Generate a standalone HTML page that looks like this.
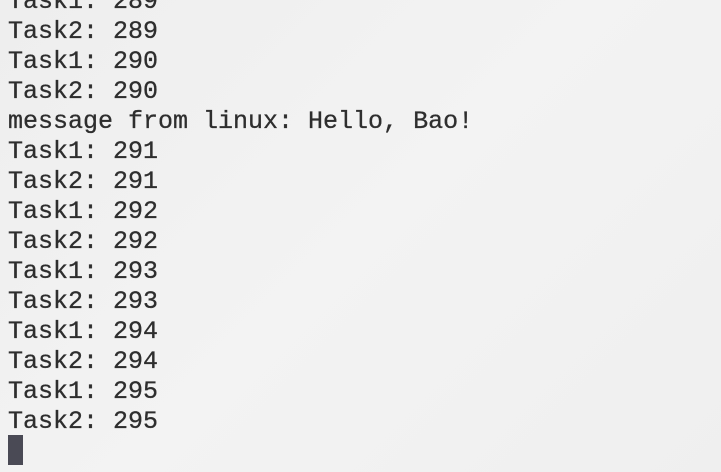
<!DOCTYPE html>
<html><head><style>
html,body{margin:0;padding:0;width:721px;height:472px;overflow:hidden;background:linear-gradient(135deg,#eeeeee,#f3f3f3 50%,#efefef);}
.t{position:absolute;left:8px;top:-13px;font-family:"Liberation Mono",monospace;font-size:25px;line-height:30px;color:#2e2e2e;white-space:pre;-webkit-text-stroke:0.3px #2e2e2e;}
.c{position:absolute;left:8px;top:435px;width:15px;height:30px;background:#4a4a55;}
</style></head><body>
<div class="t">Task1: 289
Task2: 289
Task1: 290
Task2: 290
message from linux: Hello, Bao!
Task1: 291
Task2: 291
Task1: 292
Task2: 292
Task1: 293
Task2: 293
Task1: 294
Task2: 294
Task1: 295
Task2: 295</div>
<div class="c"></div>
</body></html>
